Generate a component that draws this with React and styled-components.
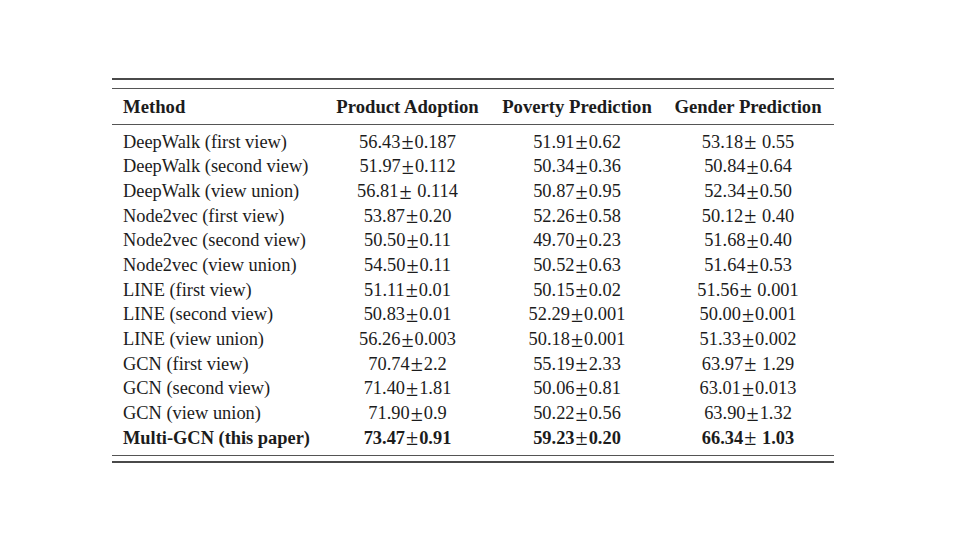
import React from "react";
import styled, { createGlobalStyle } from "styled-components";

const GlobalStyle = createGlobalStyle`
  html, body {
    margin: 0;
    padding: 0;
    background: #fff;
  }
  body {
    font-family: "Liberation Serif", "Times New Roman", serif;
    color: #1c1c1c;
  }
`;

const Page = styled.div`
  width: 960px;
  height: 540px;
  padding: 78px 0 0 112px;
  box-sizing: border-box;
`;

const Table = styled.div`
  width: 722px;
  border-top: 2px solid #4a4a4a;
  border-bottom: 2px solid #4a4a4a;
  padding: 8px 0 5px;
`;

const Grid = styled.div`
  display: grid;
  grid-template-columns: 211px 169px 170px 172px;
  border-top: 1px solid #555;
  border-bottom: 1px solid #555;
`;

const Head = styled.div`
  display: contents;
  & > div {
    height: 35px;
    border-bottom: 1px solid #555;
    font-weight: bold;
    font-size: 18.7px;
  }
`;

const Cell = styled.div`
  height: 24.67px;
  display: flex;
  align-items: center;
  justify-content: ${({ $left }) => ($left ? "flex-start" : "center")};
  padding-left: ${({ $left }) => ($left ? "11px" : "0")};
  font-size: 18.4px;
  font-weight: ${({ $bold }) => ($bold ? "bold" : "normal")};
  white-space: pre;
  margin-top: ${({ $first }) => ($first ? "5px" : "0")};
  margin-bottom: ${({ $last }) => ($last ? "4px" : "0")};
`;

const Pm = styled.span`
  font-size: 1.2em;
  line-height: 1;
  font-weight: normal;
  margin: 0 1px;
`;

const rows = [
  ["DeepWalk (first view)", "56.43±0.187", "51.91±0.62", "53.18± 0.55"],
  ["DeepWalk (second view)", "51.97±0.112", "50.34±0.36", "50.84±0.64"],
  ["DeepWalk (view union)", "56.81± 0.114", "50.87±0.95", "52.34±0.50"],
  ["Node2vec (first view)", "53.87±0.20", "52.26±0.58", "50.12± 0.40"],
  ["Node2vec (second view)", "50.50±0.11", "49.70±0.23", "51.68±0.40"],
  ["Node2vec (view union)", "54.50±0.11", "50.52±0.63", "51.64±0.53"],
  ["LINE (first view)", "51.11±0.01", "50.15±0.02", "51.56± 0.001"],
  ["LINE (second view)", "50.83±0.01", "52.29±0.001", "50.00±0.001"],
  ["LINE (view union)", "56.26±0.003", "50.18±0.001", "51.33±0.002"],
  ["GCN (first view)", "70.74±2.2", "55.19±2.33", "63.97± 1.29"],
  ["GCN (second view)", "71.40±1.81", "50.06±0.81", "63.01±0.013"],
  ["GCN (view union)", "71.90±0.9", "50.22±0.56", "63.90±1.32"],
  ["Multi-GCN (this paper)", "73.47±0.91", "59.23±0.20", "66.34± 1.03"],
];

const headers = ["Method", "Product Adoption", "Poverty Prediction", "Gender Prediction"];

// split "a±b" so the plus-minus sign gets math-like spacing
const renderValue = (v) => {
  const i = v.indexOf("±");
  if (i < 0) return v;
  return (
    <>
      {v.slice(0, i)}
      <Pm>±</Pm>
      {v.slice(i + 1)}
    </>
  );
};

export default function App() {
  return (
    <>
      <GlobalStyle />
      <Page>
        <Table>
          <Grid>
            <Head>
              {headers.map((h, i) => (
                <Cell key={h} $left={i === 0}>
                  {h}
                </Cell>
              ))}
            </Head>
            {rows.map((row, r) =>
              row.map((v, c) => (
                <Cell
                  key={r + "-" + c}
                  $left={c === 0}
                  $bold={r === rows.length - 1}
                  $first={r === 0}
                  $last={r === rows.length - 1}
                >
                  {c === 0 ? v : renderValue(v)}
                </Cell>
              ))
            )}
          </Grid>
        </Table>
      </Page>
    </>
  );
}
